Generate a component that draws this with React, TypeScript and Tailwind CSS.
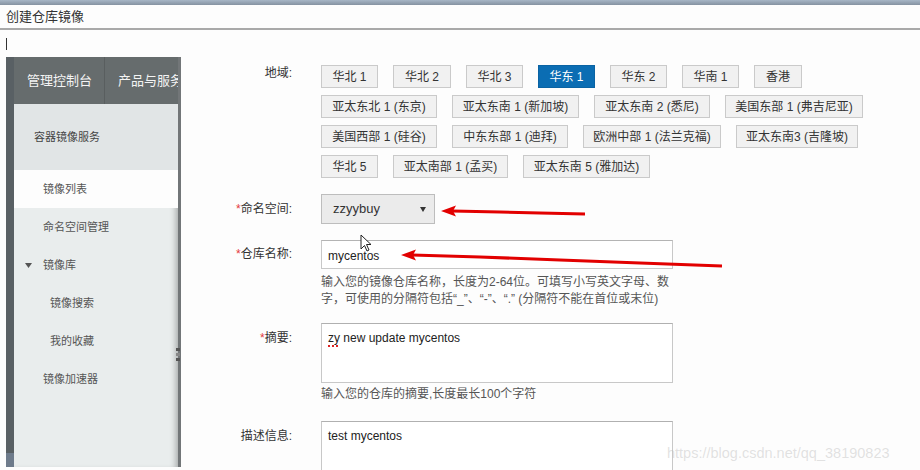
import * as React from "react";

type Region = { label: string; w: string; active?: boolean };

const regionRows: Region[][] = [
  [
    { label: "华北 1", w: "w-[57px]" },
    { label: "华北 2", w: "w-[58px]" },
    { label: "华北 3", w: "w-[57px]" },
    { label: "华东 1", w: "w-[57px]", active: true },
    { label: "华东 2", w: "w-[57px]" },
    { label: "华南 1", w: "w-[57px]" },
    { label: "香港", w: "w-[48px]" },
  ],
  [
    { label: "亚太东北 1 (东京)", w: "w-[116px]" },
    { label: "亚太东南 1 (新加坡)", w: "w-[127px]" },
    { label: "亚太东南 2 (悉尼)", w: "w-[116px]" },
    { label: "美国东部 1 (弗吉尼亚)", w: "w-[138px]" },
  ],
  [
    { label: "美国西部 1 (硅谷)", w: "w-[116px]" },
    { label: "中东东部 1 (迪拜)", w: "w-[116px]" },
    { label: "欧洲中部 1 (法兰克福)", w: "w-[138px]" },
    { label: "亚太东南3 (吉隆坡)", w: "w-[122px]" },
  ],
  [
    { label: "华北 5", w: "w-[57px]" },
    { label: "亚太南部 1 (孟买)", w: "w-[115px]" },
    { label: "亚太东南 5 (雅加达)", w: "w-[127px]" },
  ],
];

const navItems = [
  { label: "镜像列表", indent: "pl-[29px]", active: true },
  { label: "命名空间管理", indent: "pl-[29px]" },
  { label: "镜像库", indent: "pl-[11px]", caret: true },
  { label: "镜像搜索", indent: "pl-[36px]" },
  { label: "我的收藏", indent: "pl-[36px]" },
  { label: "镜像加速器", indent: "pl-[29px]" },
];

function Req() {
  return <span className="text-[#e4393c]">*</span>;
}

function Sidebar() {
  return (
    <aside className="relative flex h-[410px] w-[175px] shrink-0">
      {/* dark strip on the far left */}
      <div className="flex w-[8px] shrink-0 flex-col bg-[#596064]">
        <div className="flex-1" />
        <div className="h-[14px] bg-[#6e7b8b]" />
      </div>
      <div className="flex min-w-0 flex-1 flex-col border-r-[3px] border-[#727678] bg-[#e9eded] shadow-[inset_-6px_0_6px_-4px_rgba(0,0,0,0.3)]">
        <div className="flex h-[47px] shrink-0 items-center overflow-hidden bg-[#666c6d] text-[13px] whitespace-nowrap text-[#f4f4f4]">
          <div className="flex h-full shrink-0 items-center border-r border-[#595e5f] pl-[13px] pr-[12px]">管理控制台</div>
          <div className="shrink-0 pl-[13px]">产品与服务</div>
        </div>
        <div className="flex h-[66px] shrink-0 items-center bg-[#e1e5e6] pl-[20px] text-[11px] text-[#444]">容器镜像服务</div>
        {navItems.map((item) => (
          <div
            key={item.label}
            className={`flex h-[38px] shrink-0 items-center text-[11px] text-[#555] ${item.indent} ${
              item.active ? "bg-[#fdfdfd]" : ""
            }`}
          >
            {item.caret && (
              <svg width="7" height="5" viewBox="0 0 7 5" className="mr-[11px]">
                <path d="M0 0 L7 0 L3.5 5 Z" fill="#555" />
              </svg>
            )}
            {item.label}
          </div>
        ))}
      </div>
      {/* splitter grip */}
      <div className="absolute left-[170px] top-[291px] flex flex-col gap-[2px]">
        <div className="h-[3px] w-[4px] bg-[#555]" />
        <div className="h-[3px] w-[4px] bg-[#888]" />
        <div className="h-[3px] w-[4px] bg-[#555]" />
      </div>
    </aside>
  );
}

function Field({
  label,
  center,
  children,
  className = "",
}: {
  label: React.ReactNode;
  center?: boolean;
  children: React.ReactNode;
  className?: string;
}) {
  return (
    <div className={`flex ${center ? "items-center" : "items-start"} ${className}`}>
      <div className={`w-[111px] shrink-0 text-right text-[12px] leading-[17px] text-[#333] ${center ? "" : "pt-[7px]"}`}>
        {label}
      </div>
      <div className="ml-[29px]">{children}</div>
    </div>
  );
}

function MainForm() {
  return (
    <main className="flex-1 pt-[8px] text-[#333]">
      <div className="flex items-start">
        <div className="w-[111px] shrink-0 text-right text-[12px] leading-[17px]">地域:</div>
        <div className="ml-[29px] flex flex-col gap-[7px]">
          {regionRows.map((row, i) => (
            <div key={i} className="flex gap-[15px]">
              {row.map((r) => (
                <button
                  key={r.label}
                  type="button"
                  className={`flex h-[23px] items-center justify-center whitespace-nowrap border text-[12px] ${r.w} ${
                    r.active
                      ? "border-[#0a63a3] bg-[#0b6db3] text-white"
                      : "border-[#cacaca] bg-[#f1f1f1] text-[#333]"
                  }`}
                >
                  {r.label}
                </button>
              ))}
            </div>
          ))}
        </div>
      </div>

      <Field
        center
        className="mt-[16px]"
        label={
          <>
            <Req />
            命名空间:
          </>
        }
      >
        <div className="flex h-[30px] w-[114px] items-center justify-between border border-[#bdbdbd] bg-[#ebebeb] pl-[11px] pr-[8px] text-[13px] text-[#333]">
          <span>zzyybuy</span>
          <svg width="6" height="5" viewBox="0 0 6 5">
            <path d="M0 0 L6 0 L3 5 Z" fill="#333" />
          </svg>
        </div>
      </Field>

      <Field
        center
        className="mt-[16px]"
        label={
          <>
            <Req />
            仓库名称:
          </>
        }
      >
        <div className="flex h-[29px] w-[352px] items-center border border-[#c8c8c8] border-t-[#b4b4b4] bg-white pl-[6px] pt-[3px] text-[12px] text-[#222]">
          mycentos
        </div>
      </Field>

      <div className="ml-[140px] mt-[5px] text-[12px] leading-[17px] text-[#555]">
        <div>输入您的镜像仓库名称，长度为2-64位。可填写小写英文字母、数</div>
        <div>字，可使用的分隔符包括“_”、“-”、“.” (分隔符不能在首位或末位)</div>
      </div>

      <Field
        className="mt-[15px]"
        label={
          <>
            <Req />
            摘要:
          </>
        }
      >
        <div className="h-[60px] w-[352px] border border-[#c8c8c8] border-t-[#b0b0b0] bg-white pl-[6px] pt-[6px] text-[12px] leading-[17px] text-[#222]">
          <span className="underline decoration-[#d22] decoration-dotted decoration-[1.5px] underline-offset-[3px]">zy</span> new update mycentos
        </div>
      </Field>

      <div className="ml-[140px] mt-[3px] text-[12px] leading-[17px] text-[#555]">输入您的仓库的摘要,长度最长100个字符</div>

      <Field className="mt-[18px]" label="描述信息:">
        <div className="h-[60px] w-[352px] border border-[#c8c8c8] border-t-[#b0b0b0] bg-white pl-[6px] pt-[6px] text-[12px] leading-[17px] text-[#222]">
          test mycentos
        </div>
      </Field>
    </main>
  );
}

export default function App() {
  return (
    <div
      className="relative h-[470px] w-[920px] overflow-hidden bg-[#fdfdfd]"
      style={{ fontFamily: "'Liberation Sans', 'Noto Sans CJK SC', sans-serif" }}
    >
      <div className="h-[5px] bg-gradient-to-b from-[#a7b6c6] to-[#8592a1]" />
      <div className="flex h-[25px] items-center border-b-2 border-[#a9a9a9] pl-[6px] text-[13px] text-[#333]">创建仓库镜像</div>
      <div className="pl-[6px] pt-[8px]">
        <div className="h-[12px] w-px bg-[#333]" />
      </div>
      <div className="mt-[7px] flex pl-[6px]">
        <Sidebar />
        <MainForm />
      </div>

      {/* annotations: red arrows and mouse pointer */}
      <svg className="pointer-events-none absolute left-0 top-0" width="920" height="470" viewBox="0 0 920 470">
        <path d="M441 211 L456 205.5 L453 211 L456 216.5 Z" fill="#e20000" />
        <polyline points="452,211 500,212 540,213 585,214" fill="none" stroke="#e20000" strokeWidth="3" />
        <path d="M401 255 L416 249.5 L413 255 L416 260.5 Z" fill="#e20000" />
        <polyline points="412,255 480,257 560,260 640,263 722,266" fill="none" stroke="#e20000" strokeWidth="3" />
        <path
          d="M361 235 L361 249 L364.5 245.5 L367 251 L369 250 L366.5 244.5 L371 244.5 Z"
          fill="#fff"
          stroke="#222"
          strokeWidth="1"
          strokeLinejoin="round"
        />
      </svg>

      <div className="pointer-events-none absolute left-[667px] top-[443px] text-[14.5px] text-[rgba(190,190,190,0.45)]">
        https://blog.csdn.net/qq_38190823
      </div>
    </div>
  );
}
